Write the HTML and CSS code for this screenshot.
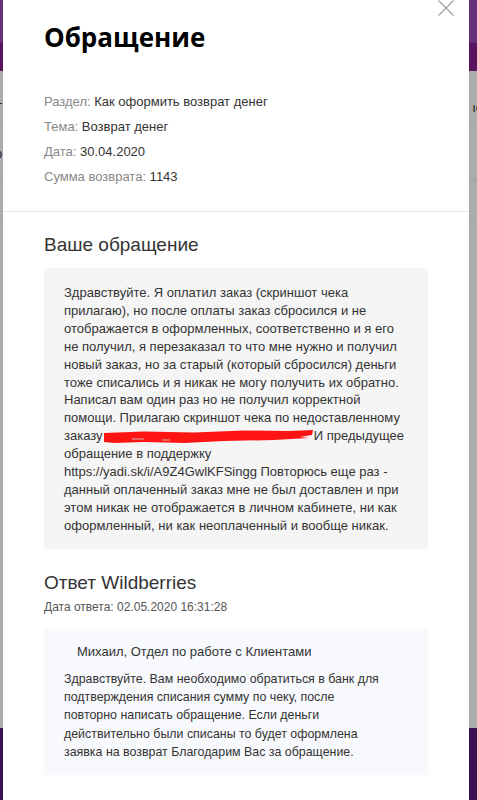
FILE: index.html
```html
<!DOCTYPE html>
<html lang="ru">
<head>
<meta charset="utf-8">
<title>Обращение</title>
<link rel="stylesheet" href="styles.css">
</head>
<body>
<div class="page">
  <div class="page-top"></div>
  <div class="page-nav"></div>
  <div class="page-main">
    <div class="page-row page-row-a"><span class="frag-l">Г</span><span class="frag-r">ıе</span></div>
    <div class="page-row page-row-b"><span class="frag-l">о</span></div>
    <div class="page-row page-row-c"></div>
  </div>
  <div class="page-footer"></div>
</div>

<div class="modal">
  <button class="close" aria-label="Закрыть">
    <svg width="16" height="16" viewBox="0 0 16 16"><path d="M0.5 0.5 L15.5 15.5 M15.5 0.5 L0.5 15.5" stroke="#9a9a9a" stroke-width="1.1" fill="none"/></svg>
  </button>
  <div class="modal-head">
    <h1 class="title">Обращение</h1>
    <ul class="info">
      <li><span class="lbl">Раздел:</span> Как оформить возврат денег</li>
      <li><span class="lbl">Тема:</span> Возврат денег</li>
      <li><span class="lbl">Дата:</span> 30.04.2020</li>
      <li><span class="lbl">Сумма возврата:</span> 1143</li>
    </ul>
  </div>
  <div class="modal-body">
    <h2 class="section-title">Ваше обращение</h2>
    <div class="msg">Здравствуйте. Я оплатил заказ (скриншот чека прилагаю), но после оплаты заказ сбросился и не отображается в оформленных, соответственно и я его не получил, я перезаказал то что мне нужно и получил новый заказ, но за старый (который сбросился) деньги тоже списались и я никак не могу получить их обратно. Написал вам один раз но не получил корректной помощи. Прилагаю скриншот чека по недоставленному заказу <span class="redact"><svg width="210" height="14" viewBox="0 0 210 14"><path d="M0 3 L40 1.5 L90 2.5 L140 0.5 L185 1 L209 0 L208 5 L196 7 L205 8 L170 10 L120 11 L80 13 L40 12 L10 13 L0 12 Z" fill="#ff1414"/><path d="M28 9 L40 9 M58 10 L66 10" stroke="#c9b3b3" stroke-width="1"/></svg></span> И предыдущее обращение в поддержку https://yadi.sk/i/A9Z4GwlKFSingg Повторюсь еще раз - данный оплаченный заказ мне не был доставлен и при этом никак не отображается в личном кабинете, ни как оформленный, ни как неоплаченный и вообще никак.</div>

    <h2 class="section-title answer-title">Ответ Wildberries</h2>
    <div class="answer-date">Дата ответа: 02.05.2020 16:31:28</div>
    <div class="msg answer">
      <div class="author">Михаил, Отдел по работе с Клиентами</div>
      <p class="answer-text">Здравствуйте. Вам необходимо обратиться в банк для подтверждения списания сумму по чеку, после повторно написать обращение. Если деньги действительно были списаны то будет оформлена заявка на возврат Благодарим Вас за обращение.</p>
    </div>
  </div>
</div>
</body>
</html>
```

FILE: styles.css
```css
* { box-sizing: border-box; }
html, body {
  margin: 0;
  padding: 0;
  height: 800px;
  overflow: hidden;
}
body {
  font-family: "Liberation Sans", Arial, sans-serif;
  position: relative;
  background: #acacac;
}

/* dimmed page behind the modal */
.page {
  display: flex;
  flex-direction: column;
  height: 800px;
}
.page-top { height: 43px; background: #66307c; }
.page-nav { height: 28px; background: #58145f; }
.page-main {
  flex: 1;
  background: #acacac;
  display: flex;
  flex-direction: column;
  padding-top: 17px;
}
.page-row {
  height: 40px;
  border-bottom: 1px solid #a6a6a6;
  display: flex;
  justify-content: space-between;
  align-items: center;
  font-size: 13px;
  color: #222;
}
.page-row-b { height: 52px; border-bottom-color: #a0a0a0; }
.frag-l { margin-left: -5px; }
.frag-r { margin-right: -6px; }
.page-footer { height: 72px; background: #3a1152; }

/* modal */
.modal {
  position: absolute;
  left: 3px;
  top: 0;
  width: 466px;
  height: 800px;
  background: #fff;
  overflow: hidden;
}
.close {
  position: absolute;
  left: 435px;
  top: -1px;
  width: 18px;
  height: 18px;
  padding: 0;
  border: 0;
  background: none;
}
.close svg { display: block; }

.modal-head {
  padding: 21px 41px 0;
  height: 212px;
  border-bottom: 1px solid #e4e4e4;
}
.title {
  margin: 0;
  font-family: "Open Sans", sans-serif;
  font-weight: 700;
  font-size: 26px;
  line-height: 32px;
  color: #000;
}
.info {
  list-style: none;
  margin: 36px 0 0;
  padding: 0;
  font-size: 13px;
  line-height: 25px;
  color: #333;
}
.lbl { color: #888; }

.modal-body {
  padding: 22px 41px 0;
}
.section-title {
  margin: 0;
  font-weight: 400;
  font-size: 19px;
  line-height: 22px;
  color: #333;
}
.msg {
  margin-top: 12px;
  width: 384px;
  background: #f5f5f5;
  padding: 16px 24px 14px 20px;
  font-size: 13px;
  line-height: 17.9px;
  color: #333;
}
.redact {
  display: inline-block;
  width: 210px;
  height: 14px;
  vertical-align: -4px;
  margin-left: -2px;
  margin-right: -4px;
}
.redact svg { display: block; }

.answer-title { margin-top: 23px; }
.answer-date {
  margin-top: 5px;
  font-size: 12px;
  line-height: 16px;
  color: #555;
}
.answer {
  margin-top: 14px;
  background: #f8f9fd;
  padding: 14px 39px 14px 20px;
}
.author {
  padding-left: 13px;
  line-height: 18px;
}
.answer-text {
  margin: 9px 0 0;
  font-size: 12.4px;
  line-height: 18.3px;
}
```
